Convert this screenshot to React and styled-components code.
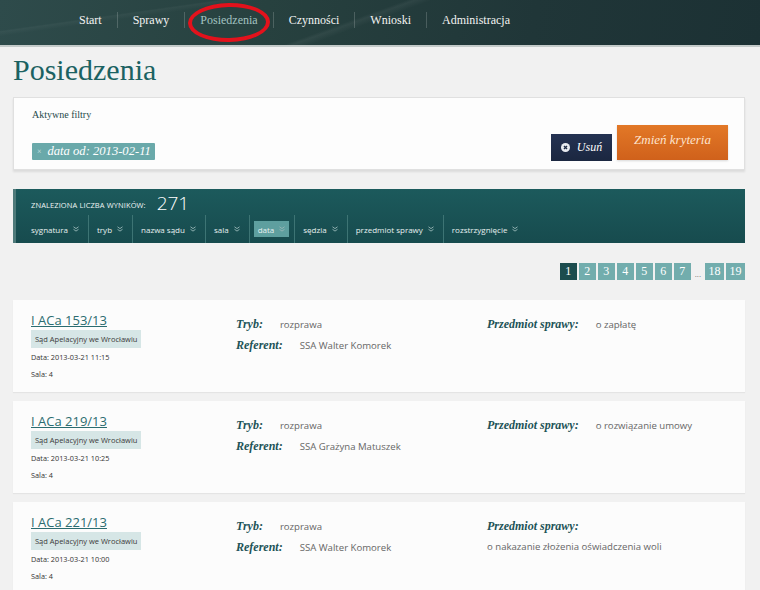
import React from 'react';
import styled, { createGlobalStyle } from 'styled-components';

const GlobalStyle = createGlobalStyle`
  html, body {
    margin: 0;
    padding: 0;
    background: #f1f1f1;
  }
  body {
    font-family: 'Open Sans', sans-serif;
  }
`;

const SERIF = `'Liberation Serif', 'DejaVu Serif', serif`;
const SANS = `'Open Sans', 'Noto Sans', sans-serif`;

// Header
const Header = styled.header`
  height: 47px;
  box-sizing: border-box;
  background:
    linear-gradient(160deg, transparent 0 46%, rgba(255, 255, 255, 0.05) 47%, transparent 49%),
    linear-gradient(172deg, transparent 0 20%, rgba(255, 255, 255, 0.04) 21%, transparent 24%),
    linear-gradient(100deg, #2e4b4b 0%, #27413f 35%, #203638 70%, #1c3134 100%);
  border-bottom: 2px solid #c3cac9;
  display: flex;
  align-items: center;
  padding: 0 0 5px 64px;
`;

const NavList = styled.nav`
  display: flex;
  align-items: center;
`;

const NavItem = styled.a`
  position: relative;
  display: block;
  padding: 0 15px;
  font-family: ${SERIF};
  font-size: 12px;
  line-height: 16px;
  color: ${p => (p.$active ? '#a3c3c2' : '#f3f3f3')};
  text-decoration: none;
  & + & {
    border-left: 1px solid rgba(255, 255, 255, 0.18);
  }
`;

const Highlight = styled.span`
  position: absolute;
  left: 3px;
  right: 2px;
  top: -9px;
  bottom: -14px;
  border: 4px solid #e3121c;
  border-radius: 50%;
  transform: rotate(-1deg);
  pointer-events: none;
`;

// Page
const Page = styled.main`
  padding: 0 15px 0 13px;
`;

const Title = styled.h1`
  margin: 5px 0 9px;
  font-family: ${SERIF};
  font-weight: normal;
  font-size: 30px;
  line-height: 36px;
  color: #1b6262;
`;

const FilterPanel = styled.section`
  background: #fdfdfd;
  border: 1px solid #e0e0e0;
  box-shadow: 0 2px 2px rgba(0, 0, 0, 0.09);
  display: flex;
  justify-content: space-between;
  align-items: flex-end;
  padding: 10px 16px 9px 18px;
  height: 73px;
  box-sizing: border-box;
`;

const FilterInfo = styled.div`
  display: flex;
  flex-direction: column;
  align-items: flex-start;
`;

const FilterLabel = styled.div`
  font-family: ${SERIF};
  font-size: 10px;
  line-height: 14px;
  color: #26494a;
`;

const FilterTag = styled.span`
  margin-top: 21px;
  display: inline-flex;
  align-items: center;
  height: 17px;
  padding: 0 4px 0 5px;
  background: #6aa9aa;
  border-radius: 1px;
  font-family: ${SERIF};
  font-style: italic;
  font-size: 12.6px;
  color: #ffffff;
  span {
    font-style: normal;
    font-size: 8px;
    color: #cfe4e4;
    margin-right: 6px;
  }
`;

const Actions = styled.div`
  display: flex;
  align-items: flex-end;
  gap: 5px;
`;

const RemoveButton = styled.button`
  height: 27px;
  width: 61px;
  border: none;
  margin-bottom: -1px;
  background: linear-gradient(#243252, #1b2740);
  color: #fff;
  font-family: ${SERIF};
  font-style: italic;
  font-size: 12px;
  display: flex;
  align-items: center;
  justify-content: center;
  gap: 7px;
  padding: 0;
  cursor: pointer;
`;

const ChangeButton = styled.button`
  height: 35px;
  width: 111px;
  border: none;
  background: linear-gradient(#e27827, #d0611b);
  color: #fde4cf;
  font-family: ${SERIF};
  font-style: italic;
  font-size: 13px;
  padding: 0 0 6px;
  box-shadow: 0 1px 2px rgba(0, 0, 0, 0.15);
  cursor: pointer;
`;

// Results bar
const ResultsBar = styled.section`
  margin-top: 19px;
  height: 54px;
  box-sizing: border-box;
  background: linear-gradient(#1c5a5c, #174b4e);
  border-left: 3px solid #4e7a7a;
  padding-left: 15px;
  color: #fff;
`;

const CountRow = styled.div`
  height: 26px;
  display: flex;
  align-items: center;
  gap: 11px;
  padding-top: 2px;
  box-sizing: border-box;
`;

const CountLabel = styled.span`
  font-family: ${SANS};
  font-size: 7.5px;
  text-transform: uppercase;
  letter-spacing: 0.1px;
  color: #eef4f4;
  margin-top: 4px;
`;

const CountValue = styled.span`
  font-family: ${SANS};
  font-weight: 300;
  font-size: 19px;
  line-height: 20px;
  color: #ffffff;
`;

const SortRow = styled.div`
  display: flex;
  height: 28px;
  margin-left: -4px;
`;

const SortItem = styled.div`
  display: flex;
  align-items: center;
  padding: 0 5px 0 ${p => (p.$first ? '0' : '4px')};
  & + & {
    border-left: 1px solid #3d7474;
  }
`;

const SortLabel = styled.span`
  display: flex;
  align-items: center;
  gap: 5px;
  height: 16px;
  padding: 0 4px;
  font-family: ${SANS};
  font-size: 8px;
  color: #e6efef;
  background: ${p => (p.$active ? '#5e9f9f' : 'transparent')};
`;

const Chevrons = () => (
  <svg width="6" height="6" viewBox="0 0 6 6">
    <path d="M0.5 0.8 L3 2.6 L5.5 0.8 M0.5 3.3 L3 5.1 L5.5 3.3" fill="none" stroke="#98b8b8" strokeWidth="0.9" />
  </svg>
);

// Pagination
const Pager = styled.nav`
  display: flex;
  justify-content: flex-end;
  align-items: center;
  gap: 2px;
  margin: 20px 0 20px;
`;

const PageBox = styled.span`
  min-width: ${p => (p.$wide ? '19px' : '17px')};
  height: 17px;
  padding: 0 1px;
  box-sizing: border-box;
  display: flex;
  align-items: center;
  justify-content: center;
  font-family: ${SERIF};
  font-size: 12px;
  color: #fff;
  background: ${p => (p.$current ? '#1c4c4e' : '#72adad')};
`;

const Ellipsis = styled.span`
  font-family: ${SANS};
  font-size: 8px;
  color: #777;
  padding: 4px 2px 0;
`;

// Result cards
const CardList = styled.div`
  display: flex;
  flex-direction: column;
  gap: 9px;
`;

const Card = styled.article`
  background: #fcfcfc;
  box-shadow: 0 1px 1px rgba(0, 0, 0, 0.05);
  display: grid;
  grid-template-columns: 205px 251px 1fr;
  padding: 11px 18px 9px;
  min-height: 92px;
  box-sizing: border-box;
`;

const CaseColumn = styled.div`
  display: flex;
  flex-direction: column;
  align-items: flex-start;
`;

const CaseLink = styled.a`
  font-family: ${SANS};
  font-size: 13px;
  line-height: 18px;
  color: #2b6c70;
  text-decoration: underline;
  text-underline-offset: 1px;
`;

const CourtBadge = styled.span`
  margin-top: 1px;
  height: 18px;
  display: flex;
  align-items: center;
  padding: 0 4px;
  background: #d6e6e6;
  font-family: ${SANS};
  font-size: 7.5px;
  color: #3a3a3a;
`;

const MetaLine = styled.div`
  font-family: ${SANS};
  font-size: 7.3px;
  line-height: 17px;
  color: #333;
  margin-top: ${p => (p.$first ? '1px' : '0')};
`;

const DetailColumn = styled.div`
  padding-top: 2px;
`;

const DetailRow = styled.div`
  line-height: 18px;
`;

const DetailLabel = styled.span`
  font-family: ${SERIF};
  font-style: italic;
  font-weight: bold;
  font-size: 12px;
  color: #1d5357;
  margin-right: 17px;
`;

const DetailValue = styled.span`
  display: inline-block;
  font-family: ${SANS};
  font-size: 9.6px;
  color: #666;
`;

const CloseIcon = () => (
  <svg width="9" height="9" viewBox="0 0 10 10">
    <circle cx="5" cy="5" r="5" fill="#e8ebf0" />
    <path d="M3.3 3.3 L6.7 6.7 M6.7 3.3 L3.3 6.7" stroke="#1e2b44" strokeWidth="1.5" />
  </svg>
);

const navItems = ['Start', 'Sprawy', 'Posiedzenia', 'Czynności', 'Wnioski', 'Administracja'];

const sortColumns = ['sygnatura', 'tryb', 'nazwa sądu', 'sala', 'data', 'sędzia', 'przedmiot sprawy', 'rozstrzygnięcie'];

const hearings = [
  { id: 'I ACa 153/13', date: '2013-03-21 11:15', judge: 'SSA Walter Komorek', subject: 'o zapłatę' },
  { id: 'I ACa 219/13', date: '2013-03-21 10:25', judge: 'SSA Grażyna Matuszek', subject: 'o rozwiązanie umowy' },
  { id: 'I ACa 221/13', date: '2013-03-21 10:00', judge: 'SSA Walter Komorek', subject: 'o nakazanie złożenia oświadczenia woli' },
];

const App = () => (
  <>
    <GlobalStyle />
    <Header>
      <NavList>
        {navItems.map(item => (
          <NavItem key={item} href="#" $active={item === 'Posiedzenia'}>
            {item}
            {item === 'Posiedzenia' && <Highlight />}
          </NavItem>
        ))}
      </NavList>
    </Header>
    <Page>
      <Title>Posiedzenia</Title>

      <FilterPanel>
        <FilterInfo>
          <FilterLabel>Aktywne filtry</FilterLabel>
          <FilterTag><span>×</span>data od: 2013-02-11</FilterTag>
        </FilterInfo>
        <Actions>
          <RemoveButton type="button"><CloseIcon />Usuń</RemoveButton>
          <ChangeButton type="button">Zmień kryteria</ChangeButton>
        </Actions>
      </FilterPanel>

      <ResultsBar>
        <CountRow>
          <CountLabel>Znaleziona liczba wyników:</CountLabel>
          <CountValue>271</CountValue>
        </CountRow>
        <SortRow>
          {sortColumns.map((col, i) => (
            <SortItem key={col} $first={i === 0}>
              <SortLabel $active={col === 'data'}>{col} <Chevrons /></SortLabel>
            </SortItem>
          ))}
        </SortRow>
      </ResultsBar>

      <Pager>
        {[1, 2, 3, 4, 5, 6, 7].map(n => (
          <PageBox key={n} $current={n === 1}>{n}</PageBox>
        ))}
        <Ellipsis>...</Ellipsis>
        <PageBox $wide>18</PageBox>
        <PageBox $wide>19</PageBox>
      </Pager>

      <CardList>
        {hearings.map(h => (
          <Card key={h.id}>
            <CaseColumn>
              <CaseLink href="#">{h.id}</CaseLink>
              <CourtBadge>Sąd Apelacyjny we Wrocławiu</CourtBadge>
              <MetaLine $first>Data: {h.date}</MetaLine>
              <MetaLine>Sala: 4</MetaLine>
            </CaseColumn>
            <DetailColumn>
              <DetailRow><DetailLabel>Tryb:</DetailLabel><DetailValue>rozprawa</DetailValue></DetailRow>
              <DetailRow><DetailLabel>Referent:</DetailLabel><DetailValue>{h.judge}</DetailValue></DetailRow>
            </DetailColumn>
            <DetailColumn>
              <DetailRow><DetailLabel>Przedmiot sprawy:</DetailLabel><DetailValue>{h.subject}</DetailValue></DetailRow>
            </DetailColumn>
          </Card>
        ))}
      </CardList>
    </Page>
  </>
);

export default App;
